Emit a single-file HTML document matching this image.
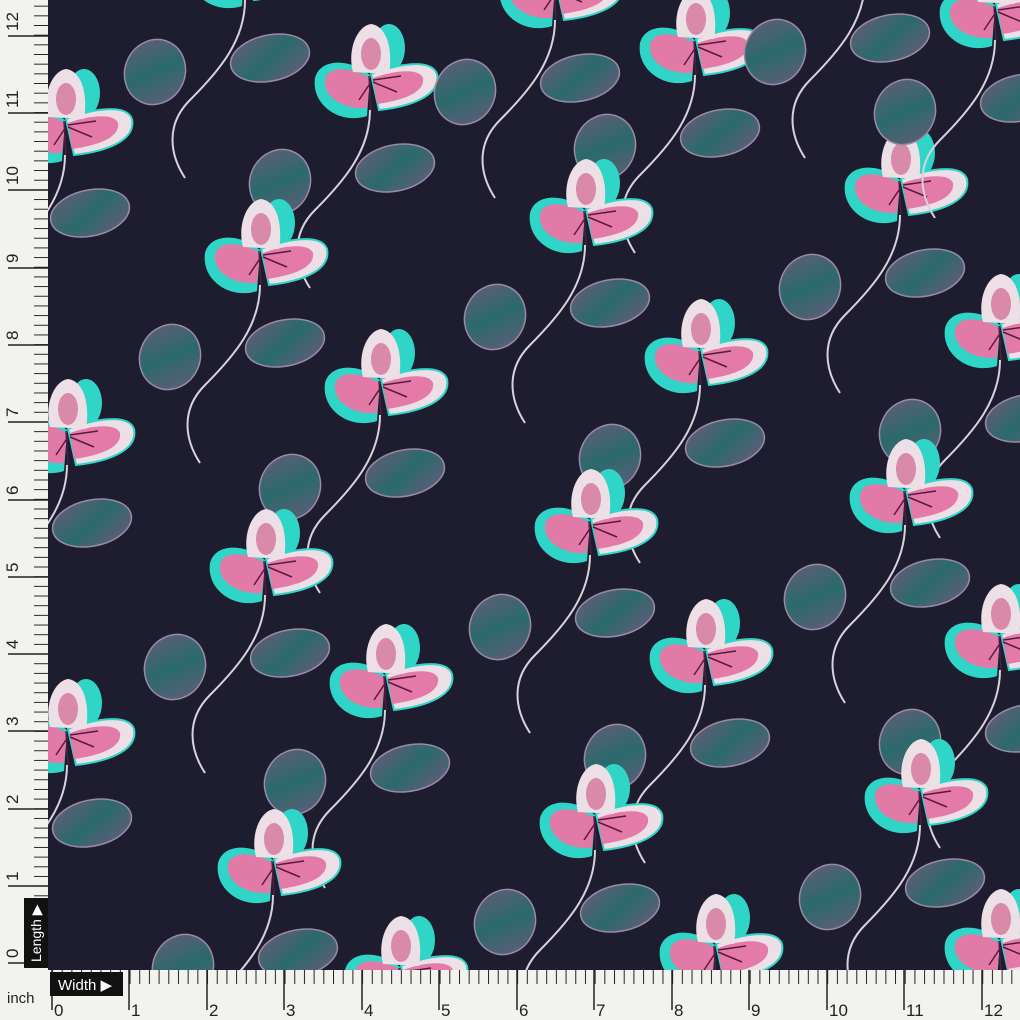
<!DOCTYPE html>
<html><head><meta charset="utf-8"><style>
html,body{margin:0;padding:0;background:#1c1b2e;overflow:hidden;width:1020px;height:1020px}
svg{display:block;position:absolute;left:0;top:0}
text{font-family:"Liberation Sans",sans-serif;}
</style></head><body>
<svg width="1020" height="1020" viewBox="0 0 1020 1020" xmlns="http://www.w3.org/2000/svg">
<defs>
<linearGradient id="lg" x1="0" y1="0" x2="1" y2="1">
<stop offset="0" stop-color="#6a5a78"/><stop offset="0.5" stop-color="#2a6a6c"/><stop offset="1" stop-color="#6a5a7a"/>
</linearGradient>
<g id="m">
<path d="M-5,40 C-5,80 -30,110 -60,140 C-85,165 -80,195 -65,218" fill="none" stroke="#d8d2dc" stroke-width="2"/>
<ellipse cx="20" cy="98" rx="40" ry="23" transform="rotate(-12 20 98)" fill="url(#lg)" stroke="#9a8aa6" stroke-width="1.5"/>
<ellipse cx="-95" cy="112" rx="30" ry="33" transform="rotate(25 -95 112)" fill="url(#lg)" stroke="#9a8aa6" stroke-width="1.5"/>
<ellipse cx="14" cy="-22" rx="16" ry="24" fill="#2fd6c8"/>
<path d="M-5,5 C-25,-12 -55,-12 -60,8 C-64,35 -35,55 -8,46 Z" fill="#2fd6c8"/>
<path d="M-5,8 C-25,-4 -48,-4 -50,10 C-52,28 -30,40 -8,38 Z" fill="#e27aa8"/>
<path d="M-4,4 C22,-6 56,-12 62,4 C66,24 40,36 4,40 Z" fill="#ecdfe6" stroke="#2fd6c8" stroke-width="2"/>
<path d="M-2,8 C20,0 44,-2 48,8 C50,22 30,30 2,34 Z" fill="#e37aa8"/>
<path d="M-22,2 C-28,-20 -18,-44 -4,-46 C12,-44 18,-20 14,4 Z" fill="#ecdfe6"/>
<ellipse cx="-4" cy="-16" rx="10" ry="16" fill="#d88aa8"/>
<path d="M-6,6 L-4,40 M-2,10 L26,6 M-2,12 L22,22 M-4,12 L-16,30" stroke="#5a1a40" stroke-width="1.5" fill="none"/>
</g>
<pattern id="tx" width="9.69" height="30" patternUnits="userSpaceOnUse" x="52"><line x1="0.5" y1="0" x2="0.5" y2="30" stroke="#222" stroke-width="1"/></pattern>
<pattern id="ty" width="30" height="9.67" patternUnits="userSpaceOnUse" y="963"><line x1="0" y1="0.5" x2="30" y2="0.5" stroke="#222" stroke-width="1"/></pattern>
<clipPath id="cp"><rect width="1020" height="1020"/></clipPath>
</defs>
<g clip-path="url(#cp)">
<rect width="1020" height="1020" fill="#1e1d30"/>
<g>
<use href="#m" x="70" y="115"/><use href="#m" x="375" y="70"/><use href="#m" x="700" y="35"/>
<use href="#m" x="590" y="205"/><use href="#m" x="265" y="245"/><use href="#m" x="905" y="175"/>
<use href="#m" x="385" y="375"/><use href="#m" x="705" y="345"/><use href="#m" x="72" y="425"/>
<use href="#m" x="1005" y="320"/><use href="#m" x="595" y="515"/><use href="#m" x="270" y="555"/>
<use href="#m" x="910" y="485"/><use href="#m" x="390" y="670"/><use href="#m" x="710" y="645"/>
<use href="#m" x="72" y="725"/><use href="#m" x="1005" y="630"/><use href="#m" x="600" y="810"/>
<use href="#m" x="925" y="785"/><use href="#m" x="278" y="855"/><use href="#m" x="720" y="940"/>
<use href="#m" x="405" y="962"/><use href="#m" x="1000" y="0"/><use href="#m" x="560" y="-20"/>
<use href="#m" x="250" y="-40"/><use href="#m" x="870" y="-60"/><use href="#m" x="1005" y="935"/>
</g>
<rect x="0" y="0" width="48" height="970" fill="#f2f2ee"/>
<rect x="34" y="0" width="14" height="965" fill="url(#ty)"/>
<g stroke="#222" stroke-width="1.5">
<line x1="8" y1="963" x2="48" y2="963"/><line x1="8" y1="886" x2="48" y2="886"/><line x1="8" y1="809" x2="48" y2="809"/><line x1="8" y1="731" x2="48" y2="731"/><line x1="8" y1="654" x2="48" y2="654"/><line x1="8" y1="577" x2="48" y2="577"/><line x1="8" y1="500" x2="48" y2="500"/><line x1="8" y1="422" x2="48" y2="422"/><line x1="8" y1="345" x2="48" y2="345"/><line x1="8" y1="268" x2="48" y2="268"/><line x1="8" y1="190" x2="48" y2="190"/><line x1="8" y1="113" x2="48" y2="113"/><line x1="8" y1="36" x2="48" y2="36"/>
</g>
<g font-size="17" fill="#222">
<text transform="translate(18,958) rotate(-90)">0</text><text transform="translate(18,881) rotate(-90)">1</text><text transform="translate(18,804) rotate(-90)">2</text><text transform="translate(18,726) rotate(-90)">3</text><text transform="translate(18,649) rotate(-90)">4</text><text transform="translate(18,572) rotate(-90)">5</text><text transform="translate(18,495) rotate(-90)">6</text><text transform="translate(18,417) rotate(-90)">7</text><text transform="translate(18,340) rotate(-90)">8</text><text transform="translate(18,263) rotate(-90)">9</text><text transform="translate(18,185) rotate(-90)">10</text><text transform="translate(18,108) rotate(-90)">11</text><text transform="translate(18,31) rotate(-90)">12</text>
</g>
<rect x="24" y="898" width="24" height="70" fill="#111"/>
<text transform="translate(41,962) rotate(-90)" font-size="14" fill="#fff">Length ▶</text>
<rect x="0" y="970" width="1020" height="50" fill="#f2f2ee"/>
<rect x="48" y="970" width="972" height="14" fill="url(#tx)"/>
<g stroke="#222" stroke-width="1.5">
<line x1="52" y1="970" x2="52" y2="1010"/><line x1="129" y1="970" x2="129" y2="1010"/><line x1="207" y1="970" x2="207" y2="1010"/><line x1="284" y1="970" x2="284" y2="1010"/><line x1="362" y1="970" x2="362" y2="1010"/><line x1="439" y1="970" x2="439" y2="1010"/><line x1="517" y1="970" x2="517" y2="1010"/><line x1="594" y1="970" x2="594" y2="1010"/><line x1="672" y1="970" x2="672" y2="1010"/><line x1="749" y1="970" x2="749" y2="1010"/><line x1="827" y1="970" x2="827" y2="1010"/><line x1="904" y1="970" x2="904" y2="1010"/><line x1="982" y1="970" x2="982" y2="1010"/>
</g>
<g font-size="17" fill="#222">
<text x="54" y="1016">0</text><text x="131" y="1016">1</text><text x="209" y="1016">2</text><text x="286" y="1016">3</text><text x="364" y="1016">4</text><text x="441" y="1016">5</text><text x="519" y="1016">6</text><text x="596" y="1016">7</text><text x="674" y="1016">8</text><text x="751" y="1016">9</text><text x="829" y="1016">10</text><text x="906" y="1016">11</text><text x="984" y="1016">12</text>
</g>
<rect x="50" y="972" width="73" height="24" fill="#111"/>
<text x="58" y="990" font-size="15" fill="#fff">Width ▶</text>
<text x="7" y="1003" font-size="15" fill="#222">inch</text>
</g>
</svg>
</body></html>
